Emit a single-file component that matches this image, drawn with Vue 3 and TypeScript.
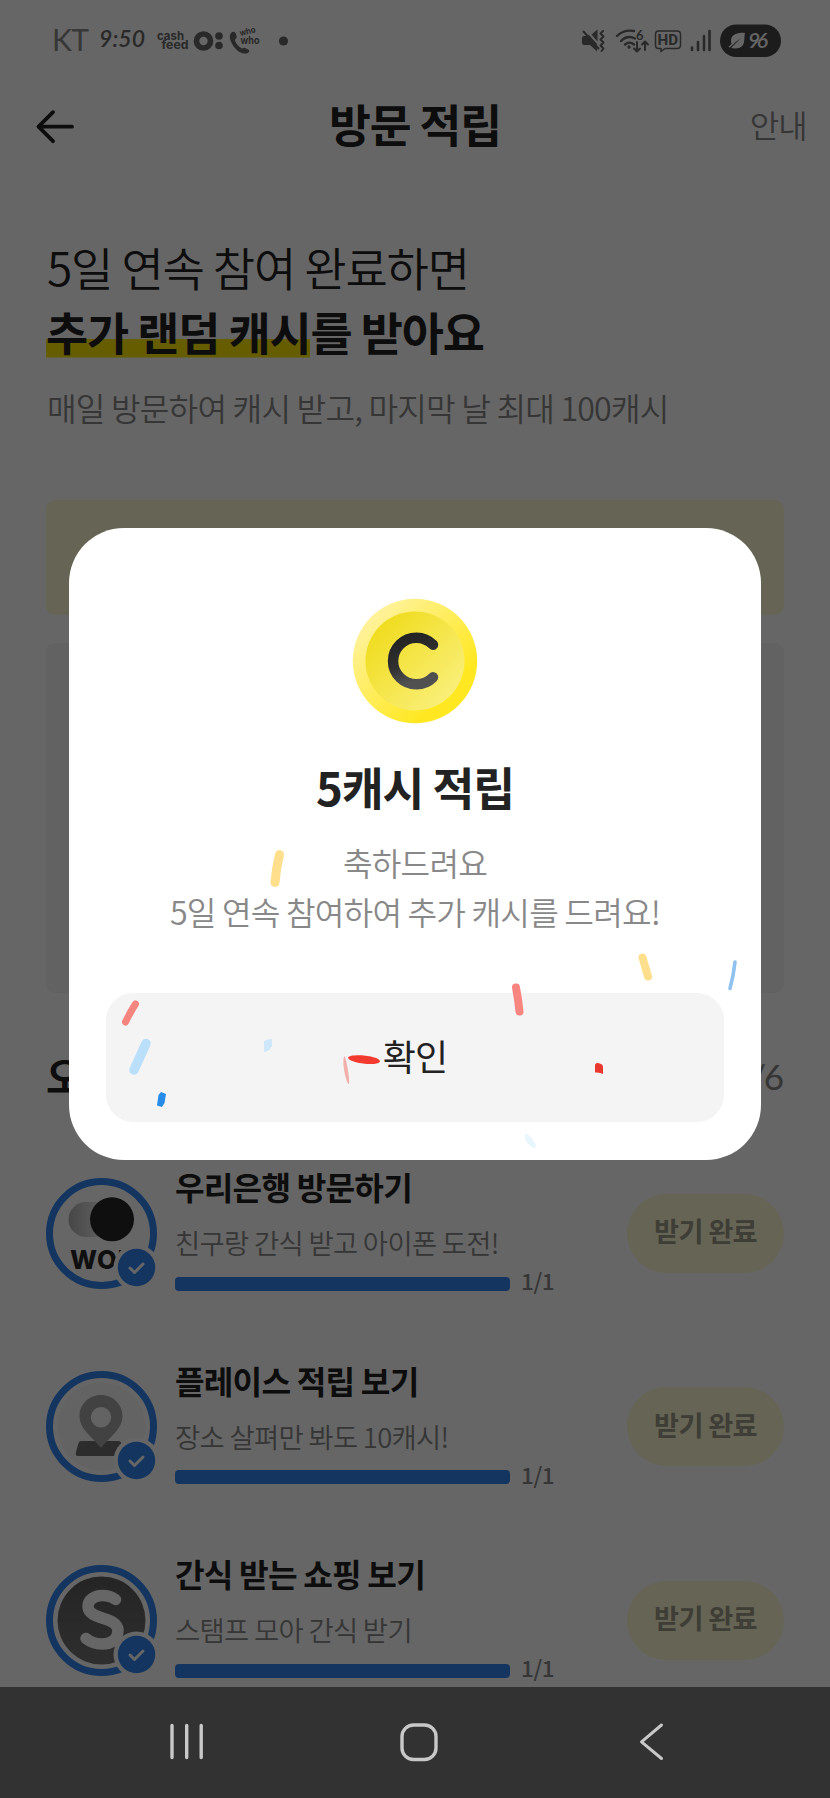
<script setup lang="ts">
interface Mission {
  icon: 'won' | 'place' | 'shop'
  title: string
  desc: string
  done: number
  total: number
}

const missions: Mission[] = [
  { icon: 'won', title: '우리은행 방문하기', desc: '친구랑 간식 받고 아이폰 도전!', done: 1, total: 1 },
  { icon: 'place', title: '플레이스 적립 보기', desc: '장소 살펴만 봐도 10캐시!', done: 1, total: 1 },
  { icon: 'shop', title: '간식 받는 쇼핑 보기', desc: '스탬프 모아 간식 받기', done: 1, total: 1 },
]
</script>

<template>
  <div class="screen">
    <div class="page">
      <header class="status">
        <svg class="status-left" width="300" height="82" viewBox="0 0 300 82">
          <text x="52" y="51" class="carrier" textLength="37">KT</text>
          <text x="99" y="47" class="clock" textLength="46">9:50</text>
          <text x="157" y="40" class="cash" textLength="27" lengthAdjust="spacingAndGlyphs">cash</text>
          <text x="161.500" y="49" class="cash" textLength="27" lengthAdjust="spacingAndGlyphs">feed</text>
          <circle cx="203.500" cy="41" r="7" fill="none" stroke="#666" stroke-width="5.600" />
          <circle cx="219" cy="36" r="3.800" fill="#666" />
          <circle cx="219" cy="45.500" r="3.800" fill="#666" />
          <path d="M231 33c2-2 4-1.500 5 1l.8 3.500-2 2.500c1 3.500 3.500 6.500 7 8.500l3-.8 3.800 2c1.500 1.200 0 3.300-2 3.800-5 .8-10-2.500-13.500-8-3-5-4.500-9.500-2.100-12.500z" fill="#666" />
          <text x="240.500" y="36" class="who-top" textLength="16" lengthAdjust="spacingAndGlyphs" transform="rotate(-14 240.5 36)">who</text>
          <text x="240.500" y="43.500" class="who" textLength="19" lengthAdjust="spacingAndGlyphs">who</text>
          <circle cx="283.500" cy="41" r="4.600" fill="#666" />
        </svg>
        <svg class="status-right" width="230" height="82" viewBox="570 0 230 82">
          <g fill="#666">
            <path d="M582 38q0-2 2-2h3l2-1 8 9v7.500l-7-6.500h-6q-2 0-2-2z" />
            <path d="M591.500 34.500l6-5v12z" />
          </g>
          <g fill="none" stroke="#666" stroke-linecap="round" stroke-linejoin="round" stroke-width="2">
            <path d="M583.500 31.500l15 17" />
            <path d="M603 31l-2.500 2.500 3 3-3 3 3 3-3 3 3 3-2 2.500" />
            <path d="M617 36c5-5 11-6 17-5M621 41c4-4 9-5 14-2.500M625 44.500c3-2.500 6-2.500 9 0" stroke-width="2.400" />
            <path d="M637 42v9.500m-3-3l3 3 3-3M645 50v-8.500m-3 3l3-3 3 3" />
            <path d="M658.500 31h18.500q3.500 0 3.500 3.500v10.500q0 3.500-3.500 3.500h-12l-4 3v-3h-2.500q-3 0-3-3.500v-10.500q0-3.500 3-3.500z" stroke-width="1.500" />
            <path d="M692 47.500v2.500M698 42v8M704 36v14M709.500 31v19" stroke-width="2.600" />
          </g>
          <circle cx="629" cy="47" r="1.700" fill="#666" />
          <text x="636" y="39.500" class="tiny" textLength="8">6</text>
          <text x="657.500" y="45.200" class="hd" textLength="20.500" lengthAdjust="spacingAndGlyphs">HD</text>
          <rect x="720" y="24.500" width="61" height="32.500" rx="16.200" fill="#464646" />
          <path d="M745 33c-10-1-14 3-14 8 0 1.500.5 3 1 4l9-7-10 10c4 1 10 .5 12-3 2-3.500 1-8 2-12z" fill="#fff" />
          <path d="M729 47l5-4" stroke="#fff" stroke-width="1.600" />
          <text x="748" y="48" class="battery" textLength="20">96</text>
        </svg>
      </header>

      <nav class="appbar">
        <svg width="44" height="44" viewBox="0 0 44 44" class="back">
          <path d="M39 22.700H5.500M20 8.200L5.500 22.700 20 37.200" fill="none" stroke="#222" stroke-width="3.800" stroke-linecap="round" stroke-linejoin="round" />
        </svg>
        <h1>방문 적립</h1>
        <span class="guide">안내</span>
      </nav>

      <section class="hero">
        <p class="lead">5일 연속 참여 완료하면</p>
        <p class="lead strong"><span class="mark">추가 랜덤 캐시</span>를 받아요</p>
        <p class="sub">매일 방문하여 캐시 받고, 마지막 날 최대 100캐시</p>
      </section>

      <div class="banner"><i class="banner-coin"></i></div>
      <div class="board"></div>

      <div class="section-head"><h2>오늘의 미션</h2><span>6<i>/</i>6</span></div>

      <ul class="missions">
        <li v-for="m in missions" :key="m.title">
          <div class="avatar">
            <svg width="111" height="111" viewBox="0 0 111 111">
              <defs>
                <linearGradient id="fade"><stop offset="0" stop-color="#b0b0b0" /><stop offset="1" stop-color="#f2f2f2" /></linearGradient>
                <linearGradient id="dark" x2="0" y2="1"><stop offset="0" stop-color="#5c5c5c" /><stop offset="1" stop-color="#747474" /></linearGradient>
              </defs>
              <circle cx="55.500" cy="55.500" r="52" fill="#fff" stroke="#3285ee" stroke-width="7" />
              <template v-if="m.icon === 'won'">
                <path d="M40 24h18v35H40a17.500 17.500 0 0 1 0-35z" fill="url(#fade)" />
                <circle cx="66" cy="41.300" r="22" fill="#262626" />
                <text x="24" y="90.500" class="won" textLength="67">WON</text>
              </template>
              <template v-else-if="m.icon === 'place'">
                <circle cx="55.500" cy="55.500" r="44" fill="#f8f8f8" />
                <path d="M35 70h37q4 0 3 4l-4 11H32q-3 0-2-4l2.500-9q.8-2 2.500-2z" fill="#6e6e6e" />
                <path fill-rule="evenodd" d="M55 24c12 0 21.500 9.500 21.500 21 0 13-12 20-21.500 32-9.500-12-21.500-19-21.500-32 0-11.500 9.500-21 21.500-21zm0 12a10.200 10.200 0 1 0 0 20.400 10.200 10.200 0 0 0 0-20.400z" fill="#a6a6a6" />
              </template>
              <template v-else>
                <circle cx="55.500" cy="55.500" r="44" fill="url(#dark)" />
                <path d="M69.500 34.500c-4-3-8-4-13-4-8.500 0-14.500 4.500-14.500 11 0 14 30 9.500 30 24 0 8.500-6.500 13.500-16 13.500-6.500 0-11.500-2-16-5.500" fill="none" stroke="#fff" stroke-width="11.500" stroke-linecap="round" />
              </template>
              <circle cx="90.500" cy="89.500" r="23" fill="#fff" />
              <circle cx="90.500" cy="89.500" r="18.700" fill="#3285ee" />
              <path d="M84 90l4.500 4.500 8.500-8.500" fill="none" stroke="#fff" stroke-width="3" stroke-linecap="round" stroke-linejoin="round" />
            </svg>
          </div>
          <div class="info">
            <h3>{{ m.title }}</h3>
            <p>{{ m.desc }}</p>
            <div class="progress">
              <div class="track"><div class="fill" :style="{ width: (m.done / m.total) * 100 + '%' }"></div></div>
              <span>{{ m.done }}/{{ m.total }}</span>
            </div>
          </div>
          <button class="claim">받기 완료</button>
        </li>
      </ul>
    </div>

    <div class="dim">
      <div class="modal">
        <svg class="coin" width="132" height="132" viewBox="-66 -66 132 132">
          <defs>
            <linearGradient id="rim" x2="1" y2="1"><stop offset=".15" stop-color="#fff29a" /><stop offset=".75" stop-color="#ffe821" /></linearGradient>
            <linearGradient id="face" x2="1" y2="1"><stop offset=".15" stop-color="#f0dc20" /><stop offset=".9" stop-color="#faf07e" /></linearGradient>
            <linearGradient id="ink" x2=".3" y2="1"><stop offset="0" stop-color="#222" /><stop offset=".6" stop-color="#303030" /><stop offset="1" stop-color="#505050" /></linearGradient>
          </defs>
          <circle r="62.200" fill="url(#rim)" />
          <circle r="49.500" fill="url(#face)" />
          <path d="M18-16.300A23.300 23.300 0 1 0 18 16.300" fill="none" stroke="url(#ink)" stroke-width="10.500" stroke-linecap="round" />
        </svg>
        <h2>5캐시 적립</h2>
        <p>축하드려요<br />5일 연속 참여하여 추가 캐시를 드려요!</p>
        <button>확인</button>
      </div>
      <!-- confetti pieces falling over the dialog -->
      <svg class="confetti" width="830" height="400" viewBox="0 800 830 400">
        <g fill="none" stroke-linecap="round">
          <path d="M279.500 854.500q-3.500 14-4.500 28" stroke="#ffde8c" stroke-width="9" />
          <path d="M642.500 957.500l5.500 19" stroke="#ffde8c" stroke-width="8" />
          <path d="M735 962q-1.500 14-5 26.500" stroke="#90c2f0" stroke-width="3.600" />
          <path d="M516 987.500q2.500 13 3.500 24" stroke="#f98580" stroke-width="8" />
          <path d="M135.500 1004q-5.500 8.500-10 18" stroke="#f5857f" stroke-width="7" />
          <path d="M146 1043.500l-12 26.500" stroke="#badffb" stroke-width="9.500" />
        </g>
        <path d="M264 1041l4-1.500 4-.5v7l-3 4.500-5 1.500z" fill="#cee6f9" />
        <path d="M158.500 1095l2.500-3 5 2-1.500 9-2.500 4-5-1.500z" fill="#268ce8" />
        <path d="M344.500 1056c2 3 5.500 24 4.500 28-2.500 2-8-24-4.500-28z" fill="#f2b0ab" />
        <path d="M348 1057.500c2-4.500 32-2 32 4-2 5-31 2-32-4z" fill="#f33a2f" />
        <path d="M595 1064.500l2-1.800q6 1 6 4.300v7q-3-2-8-1.500z" fill="#e9382e" />
        <path d="M525 1133q7 3 11 12l-1 4q-8-4-10-10z" fill="#e9f6fe" />
      </svg>
    </div>

    <footer class="system-nav">
      <svg width="830" height="111" viewBox="0 0 830 111" fill="none" stroke="#c8c8c8" stroke-linecap="round" stroke-linejoin="round">
        <path d="M172 38.500v32M186.700 38.500v32M201.200 38.500v32" stroke-width="3.400" />
        <rect x="402" y="38" width="34" height="34.500" rx="11.500" stroke-width="3.400" />
        <path d="M661.500 38L641.500 54.800 661.500 71.500" stroke-width="3" />
      </svg>
    </footer>
  </div>
</template>

<style>
body { margin: 0; }
</style>

<style scoped>
.screen {
  position: relative;
  width: 830px;
  height: 1798px;
  overflow: hidden;
  background: #fff;
  color: #222;
  font-family: "Noto Sans CJK KR", "Noto Sans", sans-serif;
  letter-spacing: -.025em;
}
h1, h2, h3, p, ul { margin: 0; padding: 0; letter-spacing: -.025em; }
button { border: 0; padding: 0; font-family: inherit; color: inherit; letter-spacing: -.025em; }
svg { display: block; letter-spacing: 0; }
.page { height: 1687px; overflow: hidden; }
.status { display: flex; justify-content: space-between; height: 82px; padding-right: 30px; }
.carrier { font: 400 30px Lato, sans-serif; fill: #8a8a8a; }
.clock { font: italic 600 23px Lato, sans-serif; fill: #666; }
.cash { font: 700 12px Inter, sans-serif; fill: #666; }
.who { font: 700 10.500px Inter, sans-serif; fill: #666; }
.who-top { font: 700 8.500px Inter, sans-serif; fill: #666; }
.tiny { font: 700 13px Lato, sans-serif; fill: #666; }
.hd { font: 700 15px Roboto, sans-serif; fill: #666; }
.battery { font: italic 600 21px Lato, sans-serif; fill: #fff; }
.appbar {
  display: grid;
  grid-template-columns: 109px 1fr 120px;
  align-items: center;
  height: 88px;
  padding: 0 22px 0 33px;
}
.appbar h1 { padding-bottom: 6px; text-align: center; font-size: 45.500px; line-height: 60px; font-weight: 700; }
.guide { padding: 0 1px 5px 0; text-align: right; font-size: 32px; letter-spacing: -.025em; font-weight: 350; color: #888; }
.hero { padding: 64px 46px 0; }
.lead { font-size: 45.800px; line-height: 64.500px; font-weight: 350; white-space: nowrap; }
.lead:first-child { padding-left: 1px; font-size: 46px; }
.lead.strong { font-weight: 700; }
.mark { display: inline-block; background: linear-gradient(#ffe500, #ffe500) 0 40px / 100% 18.500px no-repeat; }
.sub { margin-top: 21px; padding-left: 1px; font-size: 32.200px; line-height: 46px; font-weight: 350; color: #888; white-space: nowrap; }
.banner { height: 115px; margin: 70px 46px 0; border-radius: 9px; background: #fffad2; }
.banner-coin { display: block; width: 62px; height: 62px; border-radius: 50%; background: #b8a800; transform: translate(29.500px, 36px); }
.board { height: 350px; margin: 28px 46px 0; border-radius: 9px; background: #f5f5f5; }
.section-head { display: flex; justify-content: space-between; align-items: center; height: 60px; margin: 53px 46px 0; }
.section-head h2 { padding-bottom: 2px; font-size: 41px; }
.section-head span { padding-bottom: 1px; font-family: Lato, sans-serif; font-size: 35px; letter-spacing: 0; color: #888; }
.section-head i { margin-right: -2.500px; font-style: normal; }
.missions { list-style: none; padding: 52.700px 46px 0; }
.missions li { display: flex; align-items: flex-start; height: 193.500px; }
.avatar { width: 111px; padding-top: 19px; }
.info { width: 400px; margin-left: 18px; }
.info h3 { margin-top: -1.500px; font-size: 32.200px; line-height: 58px; font-weight: 700; }
.info p { margin-top: 2px; font-size: 27.400px; line-height: 50px; font-weight: 350; color: #888; }
.progress { display: flex; align-items: center; gap: 11px; height: 33px; }
.track { width: 335px; height: 14px; border-radius: 4px; overflow: hidden; background: #eee; }
.fill { height: 100%; background: #3285ee; }
.progress span { padding-bottom: 7px; font-size: 22.500px; line-height: 26px; font-weight: 500; color: #888; }
.claim { width: 157px; height: 79px; margin: 35px 0 0 auto; padding-bottom: 6px; border-radius: 40px; background: #fffad2; color: #9b9a88; font-size: 27.200px; font-weight: 700; }
.won { font: 800 25.500px Inter, sans-serif; fill: #262626; }
.dim { position: absolute; inset: 0 0 111px; background: rgba(0, 0, 0, .6); }
.modal {
  box-sizing: border-box;
  display: flex;
  flex-direction: column;
  align-items: center;
  width: 692px;
  height: 632px;
  margin: 527.500px auto 0;
  padding: 67.500px 37px 0;
  border-radius: 55px;
  background: #fff;
}
.modal h2 { margin-top: 29px; font-size: 45.500px; line-height: 60px; font-weight: 700; }
.modal p { margin-top: 22px; font-size: 32.200px; line-height: 48.500px; font-weight: 350; text-align: center; color: #888; }
.modal button { width: 618px; height: 129px; margin-top: 57.500px; padding-bottom: 5px; border-radius: 27px; background: #f4f4f4; font-size: 36px; }
.confetti { position: absolute; left: 0; top: 800px; }
.system-nav { position: absolute; inset: auto 0 0; height: 111px; background: #323232; }
</style>
